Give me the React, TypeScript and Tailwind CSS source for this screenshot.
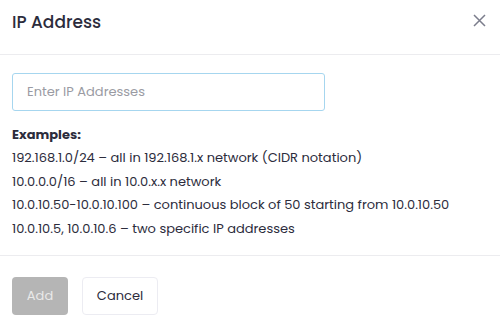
import React, { useState } from 'react';

const examples = [
  '192.168.1.0/24 – all in 192.168.1.x network (CIDR notation)',
  '10.0.0.0/16 – all in 10.0.x.x network',
  '10.0.10.50-10.0.10.100 – continuous block of 50 starting from 10.0.10.50',
  '10.0.10.5, 10.0.10.6 – two specific IP addresses',
];

const App: React.FC = () => {
  const [ip_text, set_ip_text] = useState('');

  return (
    <div className="w-[500px] h-[329px] bg-white text-[#2c2c3c] font-['Poppins','Inter','Open_Sans',sans-serif] overflow-hidden">
      {/* Header */}
      <header className="h-[55px] flex items-start justify-between px-3 border-b border-[#ececef]">
        <h2 className="mt-[9px] text-[17px] leading-[26px] font-medium">IP Address</h2>
        <button className="mt-[14px] mr-[2px] text-[#7b7d8c]" title="Close">
          <svg width="13" height="13" viewBox="0 0 13 13" fill="none" stroke="currentColor" strokeWidth="1.5">
            <path d="M1 1L12 12M12 1L1 12" />
          </svg>
        </button>
      </header>

      {/* Body */}
      <section className="px-3 pt-[18px] h-[201px] border-b border-[#ececef]">
        <input
          type="text"
          value={ip_text}
          onChange={e => set_ip_text(e.target.value)}
          placeholder="Enter IP Addresses"
          className="w-[313px] h-[38px] px-[14px] border border-[#a6d6ef] rounded-[3px] text-[13px] outline-none placeholder:text-[#9a9ba3]"
        />
        <h5 className="mt-[13px] text-[13px] leading-[22px] font-bold">Examples:</h5>
        <ul className="text-[13px] leading-[23.5px]">
          {examples.map(line => (
            <li key={line}>{line}</li>
          ))}
        </ul>
      </section>

      {/* Footer */}
      <footer className="px-3 pt-[21px] flex gap-[14px]">
        <button disabled className="w-[56px] h-[38px] rounded-[4px] bg-[#b5b5b5] text-[#e9e9e9] text-[13px]">Add</button>
        <button className="w-[76px] h-[38px] rounded-[4px] border border-[#ececf2] bg-white text-[13px]">Cancel</button>
      </footer>
    </div>
  );
};

export default App;
